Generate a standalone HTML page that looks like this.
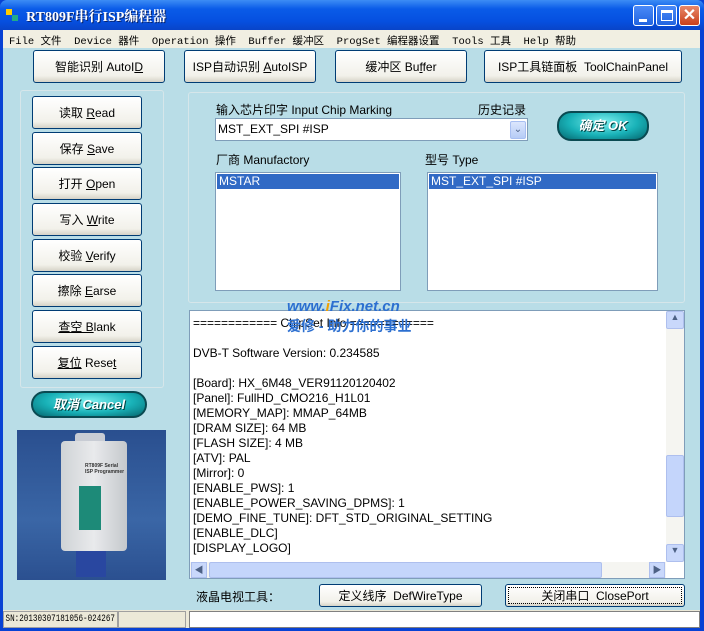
<!DOCTYPE html>
<html><head><meta charset="utf-8"><style>
*{margin:0;padding:0;box-sizing:border-box}
body{width:704px;height:631px;overflow:hidden;font-family:"Liberation Sans","Noto Sans CJK SC",sans-serif;font-size:12px;color:#000;background:#0842d4;position:relative}
.a{position:absolute}
.win{left:3px;top:30px;width:697px;height:598px;background:#b9dde7}
.title{left:0;top:0;width:704px;height:30px;background:linear-gradient(#3d8df5,#0a5be8 30%,#0650e0 70%,#0844c8);border-radius:7px 7px 0 0}
.ttxt{left:26px;top:6px;color:#fff;font-family:"Liberation Serif","Noto Serif CJK SC",serif;font-weight:bold;font-size:14px;text-shadow:1px 1px #0a246a}
.tb{top:5px;width:21px;height:21px;border:1px solid #fff;border-radius:3px;background:linear-gradient(#4a8af8,#2264e0)}
.menu{left:3px;top:30px;width:697px;height:18px;background:#f1efe2;font-family:"Liberation Mono","Noto Sans CJK SC",monospace;font-size:10.5px;padding:3px 0 0 6px;white-space:pre}
.btn{background:linear-gradient(#fff,#f2f1ea 80%,#d6d3c7);border:1px solid #003c74;border-radius:3px;text-align:center;font-size:12px;display:flex;align-items:center;justify-content:center;white-space:pre}
.grp{border:1px solid #d6e6ea;border-radius:3px}
.pill{border-radius:14px;background:radial-gradient(ellipse at 50% 35%,#7ff0f0,#19b2b8 55%,#05666e);border:2px solid #0a4a52;color:#fff;font-style:italic;font-weight:bold;text-align:center;text-shadow:1px 1px #044}
.box{background:#fff;border:1px solid #7f9db9}
.sel{background:#316ac5;color:#fff;padding-left:2px;height:15px;line-height:15px;font-size:12px}
u{text-decoration:underline}
.log{line-height:15px;font-size:12px;white-space:pre;padding-left:3px}
</style></head><body>
<div class="a title"></div>
<div class="a" style="left:6px;top:9px;width:6px;height:6px;background:#fc0"></div>
<div class="a" style="left:12px;top:15px;width:6px;height:6px;background:#2a8"></div>
<div class="a ttxt">RT809F串行ISP编程器</div>
<div class="a tb" style="left:633px"><div class="a" style="left:5px;top:13px;width:8px;height:3px;background:#fff"></div></div>
<div class="a tb" style="left:656px"><div class="a" style="left:4px;top:4px;width:12px;height:11px;border:1px solid #fff;border-top-width:3px"></div></div>
<div class="a tb" style="left:679px;background:linear-gradient(#e8886a,#c9401c);color:#fff;font-weight:bold;font-size:16px;text-align:center;line-height:19px">✕</div>
<div class="a win"></div>
<div class="a menu">File 文件  Device 器件  Operation 操作  Buffer 缓冲区  ProgSet 编程器设置  Tools 工具  Help 帮助</div>

<div class="a btn" style="left:33px;top:50px;width:132px;height:33px"><span>智能识别 AutoI<u>D</u></span></div>
<div class="a btn" style="left:184px;top:50px;width:132px;height:33px"><span>ISP自动识别 <u>A</u>utoISP</span></div>
<div class="a btn" style="left:335px;top:50px;width:132px;height:33px"><span>缓冲区 Bu<u>f</u>fer</span></div>
<div class="a btn" style="left:484px;top:50px;width:198px;height:33px"><span>ISP工具链面板  ToolChainPanel</span></div>

<div class="a grp" style="left:20px;top:90px;width:144px;height:298px"></div>
<div class="a btn" style="left:32px;top:96px;width:110px;height:33px"><span>读取 <u>R</u>ead</span></div>
<div class="a btn" style="left:32px;top:132px;width:110px;height:33px"><span>保存 <u>S</u>ave</span></div>
<div class="a btn" style="left:32px;top:167px;width:110px;height:33px"><span>打开 <u>O</u>pen</span></div>
<div class="a btn" style="left:32px;top:203px;width:110px;height:33px"><span>写入 <u>W</u>rite</span></div>
<div class="a btn" style="left:32px;top:239px;width:110px;height:33px"><span>校验 <u>V</u>erify</span></div>
<div class="a btn" style="left:32px;top:274px;width:110px;height:33px"><span>擦除 <u>E</u>arse</span></div>
<div class="a btn" style="left:32px;top:310px;width:110px;height:33px"><span><u>查空 B</u>lank</span></div>
<div class="a btn" style="left:32px;top:346px;width:110px;height:33px"><span><u>复位</u> Rese<u>t</u></span></div>
<div class="a pill" style="left:31px;top:391px;width:116px;height:27px;line-height:23px;font-size:13px">取消 Cancel</div>

<div class="a" style="left:17px;top:430px;width:149px;height:150px;background:linear-gradient(#2a4f8f,#3a66a6 60%,#2b5090)"></div>
<div class="a" style="left:75px;top:433px;width:30px;height:14px;background:#c8ccd4;border-radius:3px"></div>
<div class="a" style="left:61px;top:441px;width:66px;height:110px;background:linear-gradient(90deg,#cfd3d6,#e9eaec 50%,#c4c8cc);border-radius:4px"></div>
<div class="a" style="left:79px;top:486px;width:22px;height:44px;background:#1d8a78"></div>
<div class="a" style="left:76px;top:551px;width:30px;height:26px;background:#2947a0"></div>
<div class="a" style="left:85px;top:463px;font-size:5px;color:#333;font-weight:bold">RT809F Serial<br>ISP Programmer</div>

<div class="a grp" style="left:188px;top:92px;width:497px;height:211px"></div>
<div class="a" style="left:216px;top:101px">输入芯片印字 Input Chip Marking</div>
<div class="a" style="left:478px;top:101px">历史记录</div>
<div class="a box" style="left:215px;top:118px;width:313px;height:23px;padding:3px 0 0 2px">MST_EXT_SPI #ISP</div>
<div class="a" style="left:510px;top:121px;width:16px;height:18px;background:linear-gradient(#dbe6fd,#b6ccf6);border:1px solid #a8bff2;border-radius:2px;color:#4d6185;font-size:10px;text-align:center;line-height:16px">⌄</div>
<div class="a pill" style="left:557px;top:111px;width:92px;height:30px;line-height:25px;font-size:13px">确定 OK</div>
<div class="a" style="left:216px;top:151px">厂商 Manufactory</div>
<div class="a" style="left:425px;top:151px">型号 Type</div>
<div class="a box" style="left:215px;top:172px;width:186px;height:119px;padding:1px"><div class="sel">MSTAR</div></div>
<div class="a box" style="left:427px;top:172px;width:231px;height:119px;padding:1px"><div class="sel">MST_EXT_SPI #ISP</div></div>

<div class="a box" style="left:189px;top:310px;width:496px;height:269px;overflow:hidden">
<div class="log" style="padding-top:5px">============ ChipSet Info ============

DVB-T Software Version: 0.234585

[Board]: HX_6M48_VER91120120402
[Panel]: FullHD_CMO216_H1L01
[MEMORY_MAP]: MMAP_64MB
[DRAM SIZE]: 64 MB
[FLASH SIZE]: 4 MB
[ATV]: PAL
[Mirror]: 0
[ENABLE_PWS]: 1
[ENABLE_POWER_SAVING_DPMS]: 1
[DEMO_FINE_TUNE]: DFT_STD_ORIGINAL_SETTING
[ENABLE_DLC]
[DISPLAY_LOGO]</div>
<div class="a" style="left:476px;top:0;width:18px;height:251px;background:#f5f5f1"></div>
<div class="a" style="left:476px;top:0;width:18px;height:18px;background:#c9d8fb;border:1px solid #aebfee;border-radius:2px;font-size:9px;text-align:center;color:#4d6185">▲</div>
<div class="a" style="left:476px;top:144px;width:18px;height:62px;background:#c4d5fb;border:1px solid #aebfee;border-radius:2px"></div>
<div class="a" style="left:476px;top:233px;width:18px;height:18px;background:#c9d8fb;border:1px solid #aebfee;border-radius:2px;font-size:9px;text-align:center;color:#4d6185">▼</div>
<div class="a" style="left:0;top:251px;width:476px;height:17px;background:#f5f5f1"></div>
<div class="a" style="left:1px;top:251px;width:16px;height:16px;background:#c9d8fb;border:1px solid #aebfee;font-size:9px;text-align:center;color:#4d6185">◀</div>
<div class="a" style="left:19px;top:251px;width:393px;height:16px;background:#c4d5fb;border:1px solid #aebfee;border-radius:2px"></div>
<div class="a" style="left:459px;top:251px;width:16px;height:16px;background:#c9d8fb;border:1px solid #aebfee;font-size:9px;text-align:center;color:#4d6185">▶</div>
</div>
<div class="a" style="left:287px;top:298px;color:#2c6fd0;font-weight:bold;font-style:italic;font-size:15px">www.<span style="color:#f0a000">i</span>Fix.net.cn</div>
<div class="a" style="left:287px;top:316px;color:#2c6fd0;font-weight:bold;font-size:14px">爱修 - 助力你的事业</div>

<div class="a" style="left:196px;top:588px;font-size:12px">液晶电视工具：</div>
<div class="a btn" style="left:319px;top:584px;width:163px;height:23px"><span>定义线序  DefWireType</span></div>
<div class="a btn" style="left:505px;top:584px;width:180px;height:23px;outline:1px dotted #000;outline-offset:-4px"><span>关闭串口  ClosePort</span></div>

<div class="a" style="left:3px;top:610px;width:697px;height:18px;background:#ece9d8"></div>
<div class="a" style="left:3px;top:611px;width:115px;height:17px;border:1px solid #a0a0a0;overflow:hidden"><div style="font-family:'Liberation Mono',monospace;font-size:10px;white-space:nowrap;transform:scaleX(0.76);transform-origin:0 0;padding:2px 0 0 2px">SN:20130307181056-024267</div></div>
<div class="a" style="left:118px;top:611px;width:68px;height:17px;border:1px solid #a0a0a0"></div>
<div class="a" style="left:189px;top:611px;width:511px;height:17px;background:#fff;border:1px solid #808080"></div>
</body></html>
